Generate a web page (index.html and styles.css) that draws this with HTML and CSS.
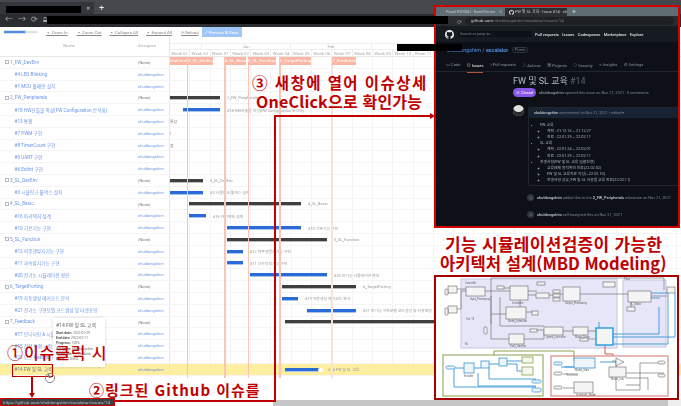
FILE: index.html
```html
<!DOCTYPE html>
<html lang="ko">
<head>
<meta charset="utf-8">
<title>GanttViewer</title>
<link rel="stylesheet" href="styles.css">
</head>
<body>
<div class="page">
  <div class="chrome-tabs"><div class="tab"><b class="black tabname"></b><span class="close">✕</span></div><span class="plus">+</span></div>
  <div class="chrome-addr"><span>←</span><span>→</span><span>⟳</span><span>🔒︎</span></div>
  <div class="toolbar">
    <div class="slider"><i></i></div>
    <a class="zi">▪ Zoom In</a><a class="zo">▪ Zoom Out</a><a class="ca">▪ Collapse All</a><a class="ea">▪ Expand All</a><a class="rl">⟳ Reload</a>
    <button class="save">✓ Preview &amp; Save</button>
  </div>
  <div class="gantt">
    <div class="head">
      <div class="col-name">Name</div>
      <div class="col-who">Assignee</div>
      <div class="col-time">
        <div class="months"><span class="m0"></span><span class="m1">Jan</span><span class="m2">Feb</span></div>
        <div class="weeks"><span>Week 51</span><span>Week 52</span><span>Week 01</span><span>Week 02</span><span>Week 03</span><span>Week 04</span><span>Week 05</span><span>Week 06</span><span>Week 07</span><span>Week 08</span><span>Week 09</span><span>Week 10</span><span>Week 11</span></div>
      </div>
    </div>
    <div class="rows">
      <div class="row"><div class="name grp"><u></u>1_FW_DevEnv</div><div class="who none">(None)</div><div class="track"></div></div>
      <div class="row"><div class="name">#4 LED Blinking</div><div class="who">chuldongshim</div><div class="track"></div></div>
      <div class="row"><div class="name">#1 MCU 툴체인 설치</div><div class="who">chuldongshim</div><div class="track"></div></div>
      <div class="row"><div class="name grp"><u></u>2_FW_Peripherals</div><div class="who none">(None)</div><div class="track"><i class="bar k" style="margin-left:0;width:50px"></i><span class="lbl">2_FW_Peripherals</span></div></div>
      <div class="row"><div class="name">#18 HW산출물 작성(FW Configuration 분석화)</div><div class="who">chuldongshim</div><div class="track"><i class="bar b" style="margin-left:13px;width:37px"></i><span class="lbl">#18 HW산출물 작성(FW Configuration 분석화)</span></div></div>
      <div class="row"><div class="name">#13 통합</div><div class="who">chuldongshim</div><div class="track"><span class="lbl flush">통합</span></div></div>
      <div class="row"><div class="name">#7 PWM 구현</div><div class="who">chuldongshim</div><div class="track"><span class="lbl flush">|</span></div></div>
      <div class="row"><div class="name">#8 TimerCount 구현</div><div class="who">chuldongshim</div><div class="track"><span class="lbl flush">점</span></div></div>
      <div class="row"><div class="name">#9 UART 구현</div><div class="who">chuldongshim</div><div class="track"></div></div>
      <div class="row"><div class="name">#6 ExtInt 구현</div><div class="who">chuldongshim</div><div class="track"></div></div>
      <div class="row"><div class="name grp"><u></u>3_SL_DevEnv</div><div class="who none">(None)</div><div class="track"><i class="bar k" style="margin-left:0;width:33px"></i><span class="lbl">3_SL_DevEnv</span></div></div>
      <div class="row"><div class="name">#3 시뮬링크 툴박스 설치</div><div class="who">chuldongshim</div><div class="track"><i class="bar b" style="margin-left:0;width:33px"></i><span class="lbl">#3 시뮬링크 툴박스 설치</span></div></div>
      <div class="row"><div class="name grp"><u></u>4_SL_Basic</div><div class="who none">(None)</div><div class="track"><i class="bar k" style="margin-left:19px;width:112px"></i><span class="lbl">4_SL_Basic</span></div></div>
      <div class="row"><div class="name">#16 아키텍처 설계</div><div class="who">chuldongshim</div><div class="track"><i class="bar b" style="margin-left:19px;width:17px"></i><span class="lbl">#16 아키텍처 설계</span></div></div>
      <div class="row"><div class="name">#10 기본기능 구현</div><div class="who">chuldongshim</div><div class="track"><i class="bar b" style="margin-left:57px;width:74px"></i><span class="lbl">#10 기본기능 구현</span></div></div>
      <div class="row"><div class="name grp"><u></u>5_SL_Function</div><div class="who none">(None)</div><div class="track"><i class="bar k" style="margin-left:57px;width:100px"></i><span class="lbl">5_SL_Function</span></div></div>
      <div class="row"><div class="name">#12 역주행방지기능 구현</div><div class="who">chuldongshim</div><div class="track"><i class="bar b" style="margin-left:57px;width:16px"></i><span class="lbl">#12 역주행방지기능 구현</span></div></div>
      <div class="row"><div class="name">#11 과속방지기능 구현</div><div class="who">chuldongshim</div><div class="track"><i class="bar b" style="margin-left:57px;width:16px"></i><span class="lbl">#11 과속방지기능 구현</span></div></div>
      <div class="row"><div class="name">#20 전기능 시뮬레이션 확인</div><div class="who">chuldongshim</div><div class="track"><i class="bar b" style="margin-left:80px;width:77px"></i><span class="lbl">#20 전기능 시뮬레이션 확인</span></div></div>
      <div class="row"><div class="name grp"><u></u>6_TargetPorting</div><div class="who none">(None)</div><div class="track"><i class="bar k" style="margin-left:112px;width:74px"></i><span class="lbl">6_TargetPorting</span></div></div>
      <div class="row"><div class="name">#19 자동생성 메커코드 분석</div><div class="who">chuldongshim</div><div class="track"><i class="bar b" style="margin-left:112px;width:16px"></i><span class="lbl">#19 자동생성 메커코드 분석</span></div></div>
      <div class="row"><div class="name">#21 전기능 구현모델 코드생성 및 타겟포팅</div><div class="who">chuldongshim</div><div class="track"><i class="bar b" style="margin-left:137px;width:49px"></i><span class="lbl">#21 전기능 구현모델 코드생성 및 타겟포팅</span></div></div>
      <div class="row"><div class="name grp"><u></u>7_Feedback</div><div class="who none">(None)</div><div class="track"><i class="bar k" style="margin-left:115px;width:149px"></i></div></div>
      <div class="row"><div class="name">#17 모니터링 &amp; 시뮬레이션</div><div class="who">chuldongshim</div><div class="track"></div></div>
      <div class="row"><div class="name">#15 전체 통합 시험</div><div class="who">chuldongshim</div><div class="track"></div></div>
      <div class="row"><div class="name">#22 모스 Readme 작성</div><div class="who">chuldongshim</div><div class="track"></div></div>
      <div class="row hot"><div class="name dark">#14 FW 및 SL 교육</div><div class="who">chuldongshim</div><div class="track"><i class="bar b" style="margin-left:115px;width:36px"></i><b class="blob"></b><span class="lbl">#14 FW 및 SL 교육</span></div></div>
    </div>
    <div class="overlay">
      <i class="vline" style="left:17px"></i><i class="vline" style="left:54px;width:2px"></i><i class="vline" style="left:78px"></i><i class="vline" style="left:109px;width:2px"></i><i class="vline pale" style="left:161px;width:2px"></i>
      <span class="ms" style="left:0;width:17px">eripherals</span><span class="ms" style="left:18px;width:25px">3_SL_DevEnv</span><span class="ms" style="left:55px;width:21px">4_SL_Basic</span><span class="ms" style="left:78px;width:28px">5_SL_Function</span><span class="ms" style="left:110px;width:31px">6_TargetPorting</span><span class="ms" style="left:162px;width:24px">7_Feedback</span>
    </div>
    <div class="tooltip">
      <h4>#14 FW 및 SL 교육</h4>
      <p><b>Start date:</b> 2022-01-29</p><p><b>End date:</b> 2022-02-11</p><p><b>Progress:</b> 100%</p><p><b>Assignee:</b> chuldongshim</p><p><b>Milestone:</b> 7_Feedback</p><p><b>State:</b> CLOSED</p>
    </div>
  </div>
  <div class="statusbar">https://github.com/chuldongshim/escalator/issues/14</div>
  <div class="hscroll"></div>

  <b class="black redact-a"></b>
  <b class="black redact-b"></b>

  <section class="inset">
    <div class="in-tabs">
      <div class="in-tab">Panel ROSRAI - GanttViewer<span>✕</span></div>
      <div class="in-tab on"><svg viewBox="0 0 16 16"><use href="#gh"/></svg>FW 및 SL 교육 · Issue #14 · chu<span>✕</span></div>
      <em>+</em>
    </div>
    <div class="in-addr"><span>⟳</span><span class="url"><b>github.com</b>/chuldongshim/escalator/issues/14</span></div>
    <div class="gh-top">
      <svg class="gh-logo" viewBox="0 0 16 16"><path id="gh" fill="#f0f0f0" d="M8 0C3.58 0 0 3.58 0 8c0 3.54 2.29 6.53 5.47 7.59.4.07.55-.17.55-.38 0-.19-.01-.82-.01-1.49-2.01.37-2.53-.49-2.69-.94-.09-.23-.48-.94-.82-1.13-.28-.15-.68-.52-.01-.53.63-.01 1.08.58 1.23.82.72 1.21 1.87.87 2.33.66.07-.52.28-.87.51-1.07-1.78-.2-3.64-.89-3.64-3.95 0-.87.31-1.59.82-2.15-.08-.2-.36-1.02.08-2.12 0 0 .67-.21 2.2.82.64-.18 1.32-.27 2-.27.68 0 1.36.09 2 .27 1.53-1.04 2.2-.82 2.2-.82.44 1.1.16 1.92.08 2.12.51.56.82 1.27.82 2.15 0 3.07-1.87 3.75-3.65 3.95.29.25.54.73.54 1.48 0 1.07-.01 1.93-.01 2.2 0 .21.15.46.55.38A8.013 8.013 0 0016 8c0-4.42-3.58-8-8-8z"/></svg>
      <div class="gh-search">Search or jump to...</div>
      <nav class="gh-nav"><a>Pull requests</a><a>Issues</a><a>Codespaces</a><a>Marketplace</a><a>Explore</a></nav>
    </div>
    <div class="gh-repo"><a>chuldongshim</a> / <a><strong>escalator</strong></a><span class="pill">Private</span></div>
    <div class="gh-tabs"><a>&lt;&gt; Code</a><a class="cur">⊙ Issues</a><a>⑂ Pull requests</a><a>▷ Actions</a><a>▦ Projects</a><a>◇ Security</a><a>∿ Insights</a><a>⚙ Settings</a></div>
    <div class="gh-title">FW 및 SL 교육 <span>#14</span></div>
    <div class="gh-meta"><span class="closed">⊘ Closed</span><span><b>chuldongshim</b> opened this issue on Nov 21, 2021 · 0 comments</span></div>
    <div class="gh-thread">
      <div class="avatar"></div>
      <div class="comment">
        <div class="c-head"><b>chuldongshim</b> commented on Nov 21, 2021 • edited ▾</div>
        <ul>
          <li>FW 교육<ul><li>계획 : 21.12.16 ~ 21.12.27</li><li>완료 : 22.01.29 ~ 22.02.11</li></ul></li>
          <li>SL 교육<ul><li>계획 : 22.01.24 ~ 22.02.01</li><li>완료 : 22.01.29 ~ 22.02.11</li></ul></li>
          <li>진행사항(FW 및 SL 교육 일괄진행)<ul><li>교육예제 동작확인 완료(22.02.02)</li><li>FW 및 SL 교육자료 작성(~22.02.10)</li><li>진행사항 공유, FW 및 SL 사용법 교육 완료(22.02.11)</li></ul></li>
        </ul>
      </div>
    </div>
    <div class="gh-event first"><i>◷</i><span><b>chuldongshim</b> added this to the <b>2_FW_Peripherals</b> milestone on Nov 21, 2021</span></div>
    <div class="gh-event"><i>♙</i><span><b>chuldongshim</b> self-assigned this on Nov 21, 2021</span></div>
  </section>

  <section class="model">
    <svg class="model-svg" viewBox="434 275 245 125" xmlns="http://www.w3.org/2000/svg">
      <rect x="461" y="279" width="156" height="69" class="area"/>
      <rect x="623" y="280" width="43" height="67" class="area"/>
      <path class="grey" d="M491 324V278H664V290M457 289H466M485 291H510M497 288H510M528 291H537M528 295H553M560 294H563M580 294H628M457 309H461V291H466M491 314H506M526 312H532M491 296V339H509M524 339H544V331M563 331H573M537 330H544M588 331H596M520 300V307M500 297V326H544M588 339H596M651 296H667M631 302V307"/>
      <path class="blue" d="M613 334H659V307 M613 344H668V293H651 M613 337H675V293 M651 298H660 M599 328V322"/>
      <path class="pinkw" d="M605 345V354H613V356"/>
      <path class="olive" d="M494 355V351H574V361"/>
      <path class="blue" d="M455 368H464M474 368H481M489 364H499M507 361H522M507 364H517V371H522M478 373V386H536M489 367V379H536M454 369V387H536"/>
      <path class="blue" d="M564 367H578M622 362H620M600 362H619M578 367M561 367H578"/>
      <path class="grey" d="M578 375H567V373M563 374H578M563 388H577V390M612 361H616V390H640V363H664M610 377H613M626 373H664M626 378H648V390M626 385H640"/>
      <rect x="443" y="355" width="100" height="41" class="grn"/>
      <rect x="551" y="356" width="117" height="40" class="rdb"/>
      <g class="blk">
        <rect x="466" y="287" width="19" height="9"/><rect x="510" y="286" width="18" height="14"/><rect x="506" y="307" width="20" height="12"/><rect x="563" y="287" width="17" height="14"/><rect x="553" y="290" width="7" height="3"/><rect x="553" y="294" width="7" height="3"/><rect x="553" y="298" width="7" height="3"/>
        <rect x="497" y="286" width="7" height="3"/><rect x="537" y="282" width="8" height="3"/><rect x="536" y="293" width="13" height="5"/><rect x="532" y="311" width="6" height="4"/><rect x="544" y="327" width="19" height="8"/><rect x="573" y="327" width="15" height="8"/><rect x="530" y="329" width="7" height="3"/><rect x="509" y="334" width="15" height="10"/><rect x="580" y="338" width="8" height="3"/><rect x="603" y="282" width="12" height="5"/>
        <rect x="628" y="291" width="23" height="11"/><rect x="627" y="307" width="8" height="4"/><rect x="667" y="287" width="8" height="6"/><rect x="448" y="286" width="9" height="7"/><rect x="448" y="306" width="9" height="7"/><rect x="445" y="289" width="3" height="6" rx="1"/><rect x="445" y="308" width="3" height="7" rx="1"/><rect x="484" y="327" width="3" height="7" rx="1"/>
        <rect x="609" y="367" width="17" height="10"/><rect x="574" y="382" width="19" height="11"/>
      </g>
      <g class="blb">
        <rect x="596" y="328" width="17" height="17" class="sel"/>
        <rect x="464" y="363" width="10" height="10"/><rect x="481" y="361" width="8" height="7"/><rect x="499" y="358" width="8" height="8"/><rect x="522" y="357" width="11" height="6" class="grnb"/><rect x="522" y="367" width="11" height="8" class="grnb"/><rect x="446" y="366" width="9" height="3" rx="1.5"/><rect x="532" y="380" width="9" height="3" rx="1.5"/><rect x="532" y="388" width="9" height="4" rx="1.5"/><rect x="554" y="362" width="8" height="3" rx="1.5"/><rect x="574" y="358" width="21" height="10"/>
      </g>
      <g class="blk"><rect x="554" y="372" width="8" height="3" rx="1.5"/><rect x="554" y="386" width="8" height="3" rx="1.5"/><rect x="658" y="361" width="7" height="3" rx="1.5"/><rect x="658" y="374" width="7" height="3" rx="1.5"/><path d="M616 358l8 4-8 4z"/></g>
      <g class="mini">
        <text x="470" y="300">Input_Processing</text><text x="512" y="304">Scheduler</text><text x="508" y="322">Mode_Scheduler</text><text x="565" y="304">Output_Processing</text><text x="546" y="338">Speed_Controller</text><text x="575" y="338">Motor_Driver</text><text x="510" y="347">Fault_Handler</text><text x="630" y="305">SC_Motor</text><text x="466" y="320">Cnt: 10</text><text x="465" y="345">Rx</text><text x="464" y="377">Encoder</text><text x="575" y="371">Model_Main</text><text x="576" y="396">Scheduler_Model</text><text x="611" y="380">Model_Sub</text><text x="465" y="284">Controller</text><text x="624" y="279.5">Plant</text>
      </g>
    </svg>
  </section>
  <div class="corner"></div>

  <div class="ann-box title-box"></div>
  <div class="ann-box status-box"></div>
  <div class="ann-path path-v"></div>
  <div class="ann-path path-h"></div>
  <div class="ann-path path-top"></div>
  <div class="ann-arrow right"></div>
  <div class="ann-path path-down"></div>
  <div class="ann-arrow down"></div>
  <svg class="cursor" viewBox="0 0 12 12"><circle cx="6" cy="6" r="4.6"/><path d="M4 2l3 3.5h-2z"/></svg>

  <div class="note n3">③ 새창에 열어 이슈상세</div>
  <div class="note n3b">OneClick으로 확인가능</div>
  <div class="note n1">①이슈클릭 시</div>
  <div class="note n2">②링크된 Github 이슈를</div>
  <div class="note h1">기능 시뮬레이션검증이 가능한</div>
  <div class="note h2">아키텍처 설계(MBD Modeling)</div>
</div>
</body>
</html>
```
FILE: styles.css
```css
* { box-sizing: border-box; }
html, body { margin: 0; padding: 0; }
body { background: #fff; font-family: Roboto, "Noto Sans CJK KR", sans-serif; overflow: hidden; }
.page { position: relative; width: 681px; height: 406px; overflow: hidden; background: #fff; }
.black { position: absolute; background: #000; display: block; z-index: 6; }
.tabname { left: 6px; top: 4px; width: 75px; height: 7px; }

.chrome-tabs { height: 14px; background: #44484c; display: flex; align-items: flex-end; }
.tab { position: relative; width: 94px; height: 12px; background: #33363a; color: #ddd; font-size: 5px; display: flex; justify-content: flex-end; align-items: center; padding-right: 4px; }
.plus { color: #eee; font-size: 9px; line-height: 12px; margin-left: 5px; }
.chrome-addr { height: 13px; background: #2b2c2f; color: #aaa; font-size: 8px; line-height: 12px; display: flex; gap: 5px; padding-left: 5px; filter: blur(.3px); }

.toolbar { height: 10px; display: flex; align-items: center; padding-left: 4px; font-size: 4.4px; color: #8a8a8a; filter: blur(.4px); }
.toolbar a { text-decoration: underline; white-space: nowrap; }
.slider { width: 33px; height: 2px; background: #ddd; position: relative; }
.slider i { display: block; width: 21px; height: 2px; background: #4a8fe8; box-shadow: 1px 0 0 1px #ddd; }
.zi { margin-left: 9px; }
.zo { margin-left: 9px; }
.ca { margin-left: 8px; }
.ea { margin-left: 8px; }
.rl { margin-left: 9px; }
.save { margin-left: 3px; width: 40px; height: 10px; background: #a0c6f8; color: #fff; border: 0; padding: 0; font: inherit; }

.gantt { position: relative; filter: blur(.5px); }
.head { display: flex; height: 20px; border-bottom: 1px solid #e8e8e8; color: #aaa; font-size: 4.4px; }
.col-name { width: 138px; text-align: center; line-height: 17px; }
.col-who { width: 32px; line-height: 17px; border-right: 1px solid #e5e5e5; }
.col-time { flex: 1; display: flex; flex-direction: column; }
.months { height: 7px; margin-top: 6px; display: flex; border-top: 1px solid #eee; text-align: center; border-bottom: 1px solid #eee; line-height: 5px; }
.m0 { width: 32px; border-right: 1px solid #eee; }
.m1 { width: 89px; border-right: 1px solid #eee; }
.m2 { width: 81px; border-right: 1px solid #eee; }
.weeks { flex: 1; display: flex; line-height: 7px; text-align: center; }
.weeks span { flex: 0 0 20.3px; border-right: 1px solid #eee; white-space: nowrap; overflow: hidden; }

.rows { display: flex; flex-direction: column; }
.row { height: 11.8px; display: flex; align-items: center; border-bottom: 1px solid #f5f5f5; font-size: 4.6px; }
.row.hot { background: #fdeea0; }
.name { width: 138px; padding-left: 14.5px; color: #6e96e4; white-space: nowrap; font-size: 4.7px; }
.name.dark { color: #777; }
.name.grp { padding-left: 5px; display: flex; align-items: center; gap: 1px; color: #6e96e4; }
.name u { width: 4px; height: 4px; border: 1px solid #bbb; display: block; }
.who { width: 32px; color: #6e96e4; font-size: 4.1px; white-space: nowrap; border-right: 1px solid #e5e5e5; height: 100%; line-height: 11px; }
.who.none { color: #777; }
.track { flex: 1; height: 100%; display: flex; align-items: center; background: repeating-linear-gradient(90deg, transparent 0 19.3px, #f4f4f4 19.3px 20.3px); }
.hot .track { background: none; }
.bar { display: block; height: 3px; flex: none; }
.bar.k { background: #3f3f3f; box-shadow: 0 1px 0 #bbb; }
.bar.b { background: #2a6bd8; box-shadow: 0 1px 0 #a9c5ee; }
.lbl { margin-left: 7px; color: #999; font-size: 3.9px; white-space: nowrap; }
.lbl.flush { margin-left: 0; color: #777; }
.blob { display: block; flex: none; width: 5px; height: 4px; margin: 2px 0 0 -3px; border-radius: 2px; background: #fff; }
.blob + .lbl { margin-left: 5px; }

.overlay { position: absolute; left: 170px; top: 20px; width: 264px; height: 321px; pointer-events: none; }
.vline { position: absolute; top: 0; bottom: 0; width: 1px; background: #fbc4b4; }
.vline.pale { background: #fde0d8; }
.ms { position: absolute; top: 0; height: 8px; background: #fcb6a4; color: #fff; font-size: 4.4px; line-height: 8px; text-align: center; white-space: nowrap; overflow: hidden; }

.tooltip { position: absolute; left: 53px; top: 281px; width: 52px; height: 49px; background: #fff; box-shadow: 0 0 3px rgba(0,0,0,.18); padding: 3px 3px; font-size: 3.4px; color: #777; z-index: 2; }
.tooltip h4 { margin: 0 0 3px; font-size: 5px; font-weight: 400; color: #666; white-space: nowrap; }
.tooltip p { margin: 0 0 1.2px; white-space: nowrap; }
.tooltip b { color: #555; }

.statusbar { position: absolute; left: 1px; top: 399px; width: 113px; height: 7px; background: #3c4043; color: #bbb; font-size: 4.4px; line-height: 7px; padding-left: 2px; white-space: nowrap; z-index: 5; filter: blur(.3px); }
.hscroll { position: absolute; left: 273px; right: 0; top: 400px; height: 6px; background: #c6c6c6; }
.corner { position: absolute; left: 668px; right: 0; top: 400px; height: 6px; background: #eee; z-index: 3; }

.redact-a { left: 47px; top: 16px; width: 401px; height: 8px; }
.redact-b { left: 397px; top: 44px; width: 65px; height: 7px; }

.inset { position: absolute; left: 434px; top: 5px; width: 246px; height: 223px; border: 2px solid #d40000; background: #0d1117; color: #7d8590; overflow: hidden; font-size: 4.2px; z-index: 3; display: flex; flex-direction: column; }
.inset > * { filter: blur(.35px); }
.in-tabs { height: 9px; background: #606e73; display: flex; align-items: flex-end; padding-left: 6px; color: #c4c9cb; flex: none; }
.in-tab { width: 62px; height: 8px; line-height: 8px; padding-left: 4px; display: flex; justify-content: space-between; white-space: nowrap; overflow: hidden; padding-right: 2px; font-size: 4px; }
.in-tab.on { background: #2c2d30; width: 62px; margin-left: 1px; gap: 1px; justify-content: flex-start; }
.in-tab svg { width: 5px; height: 5px; margin-top: 1.5px; flex: none; }
.in-tab span { margin-left: auto; }
.in-tabs em { color: #ddd; font-style: normal; font-size: 7px; line-height: 8px; margin-left: 5px; }
.in-addr { height: 10px; background: #2a2b2e; display: flex; align-items: center; padding-left: 21px; gap: 3px; flex: none; color: #999; font-size: 6px; }
.url { background: #1f2023; height: 8px; line-height: 8px; flex: 1; margin-right: 4px; padding-left: 6px; font-size: 4.4px; color: #777; border-radius: 4px; }
.url b { color: #ccc; font-weight: 400; }
.gh-top { height: 16px; background: #161b22; display: flex; align-items: center; padding-left: 9px; flex: none; color: #ddd; font-size: 4.1px; }
.gh-logo { width: 9px; height: 9px; flex: none; }
.gh-search { width: 73px; height: 6px; line-height: 6px; margin-left: 5px; background: #0d1117; color: #7d8590; padding-left: 1px; font-size: 3.8px; }
.gh-nav { display: flex; gap: 3.4px; margin-left: 3px; font-weight: 500; white-space: nowrap; }
.gh-repo { flex: none; height: 14px; padding: 2px 0 0 11px; line-height: 12px; font-size: 5.4px; color: #7d8590; }
.gh-repo a { color: #4f8fe0; }
.gh-repo strong { font-weight: 700; }
.pill { font-size: 3.4px; border: 1px solid #30363d; border-radius: 4px; padding: 0 1.5px; margin-left: 4px; vertical-align: 1px; }
.gh-tabs { flex: none; height: 16px; border-bottom: 1px solid #21262d; display: flex; align-items: center; padding: 2px 0 0 10px; gap: 6.4px; white-space: nowrap; color: #8d949c; font-size: 4px; }
.gh-tabs .cur { color: #ccc; font-weight: 500; border-bottom: 1px solid #b4543e; height: 15px; line-height: 15px; margin-bottom: -1px; }
.gh-title { flex: none; height: 15px; margin-left: 77px; padding-top: 3px; color: #b4bcc4; font-size: 9px; line-height: 12px; white-space: nowrap; }
.gh-title span { color: #5a626c; }
.gh-meta { flex: none; height: 13px; margin-left: 77px; display: flex; align-items: flex-start; padding-top: 1px; gap: 3px; white-space: nowrap; font-size: 3.9px; }
.gh-meta span:last-child { line-height: 9px; }
.closed { background: #8957e5; color: #eee; width: 23px; height: 9px; line-height: 9px; border-radius: 5px; text-align: center; font-weight: 500; }
.gh-thread { flex: none; margin: 7px 0 0 77px; position: relative; }
.avatar { position: absolute; left: 0; top: -2px; width: 11px; height: 11px; border-radius: 50%; background: #e0e0e0; box-shadow: inset 0 -4px 0 #2a2a2a; }
.comment { margin-left: 15px; width: 155px; height: 79px; border: 1px solid #21262d; border-right: 0; border-radius: 2px; color: #aeb6be; font-size: 3.8px; overflow: hidden; }
.c-head { height: 10px; line-height: 9px; background: #152333; padding-left: 5px; color: #7d8590; white-space: nowrap; }
.c-head b { color: #aeb6be; }
.comment ul { margin: 0; padding: 0 0 0 11px; list-style: disc; line-height: 6.2px; }
.comment > ul { padding-top: 3.5px; }
.comment ul ul { padding-left: 7px; list-style: circle; }
.gh-event { flex: none; display: flex; align-items: center; height: 17px; margin-left: 91px; gap: 3px; white-space: nowrap; font-size: 3.9px; }
.gh-event.first { margin-top: 3px; }
.gh-event i { width: 7px; height: 7px; border-radius: 50%; background: #30363d; font-style: normal; text-align: center; line-height: 7px; font-size: 4px; flex: none; }
.gh-event b { color: #aeb6be; }

.model { position: absolute; left: 434px; top: 275px; width: 245px; height: 125px; background: #fff; border: 2px solid #a40000; z-index: 3; overflow: hidden; }
.model-svg { position: absolute; left: -2px; top: -2px; width: 245px; height: 125px; filter: blur(.2px); }
.area { fill: #e6e6f8; stroke: #c4c4de; stroke-width: 1; }
.grey { fill: none; stroke: #777; stroke-width: .7; }
.blue { fill: none; stroke: #4a9ed8; stroke-width: 1; }
.pinkw { fill: none; stroke: #c8605a; stroke-width: 1; }
.olive { fill: none; stroke: #8aa04e; stroke-width: 1; }
.grn { fill: #fff; fill-opacity: 0; stroke: #9aae6c; stroke-width: 1.2; }
.rdb { fill: #fff; fill-opacity: 0; stroke: #d98a86; stroke-width: 1.2; }
.blk rect, .blk path { fill: #f4f4f4; stroke: #666; stroke-width: .6; }
.blb rect { fill: #eef6fc; stroke: #3c97d3; stroke-width: .8; }
.blb .sel { stroke: #2ea0dc; stroke-width: 1.5; fill: #f4f4f4; }
.blb .grnb { stroke: #8aa04e; fill: #f6f8ee; }
.mini text { font-size: 2.6px; fill: #666; font-family: Roboto, sans-serif; }

.ann-box { position: absolute; border: 1px solid #c00000; z-index: 5; }
.title-box { left: 12px; top: 364px; width: 41px; height: 13px; }
.status-box { left: 0; top: 398px; width: 115px; height: 8px; z-index: 6; }
.ann-path { position: absolute; background: #c00000; z-index: 5; }
.path-v { left: 274px; top: 115px; width: 2px; height: 287px; }
.path-h { left: 114px; top: 400px; width: 162px; height: 2px; }
.path-top { left: 274px; top: 115px; width: 156px; height: 2px; }
.ann-arrow { position: absolute; width: 0; height: 0; z-index: 5; }
.ann-arrow.right { left: 430px; top: 113px; border-left: 5px solid #c00000; border-top: 3px solid transparent; border-bottom: 3px solid transparent; }
.path-down { left: 31px; top: 377px; width: 2px; height: 16px; }
.ann-arrow.down { left: 29px; top: 393px; border-top: 5px solid #c00000; border-left: 3px solid transparent; border-right: 3px solid transparent; }
.cursor { position: absolute; left: 44px; top: 372px; width: 12px; height: 12px; z-index: 5; fill: none; stroke: #888; stroke-width: 1; }

.note { position: absolute; color: #c00000; font-family: "Noto Sans CJK KR", sans-serif; font-weight: 700; white-space: nowrap; z-index: 5; line-height: 1; }
.n3 { left: 252px; top: 75px; font-size: 15.5px; letter-spacing: 1.45px; }
.n3b { left: 256px; top: 93px; font-size: 16px; letter-spacing: .2px; }
.n1 { left: 7px; top: 344px; font-size: 16px; font-weight: 500; letter-spacing: .9px; }
.n2 { left: 89px; top: 382px; font-size: 15px; letter-spacing: 1px; }
.h1 { left: 445px; top: 235px; font-size: 17px; letter-spacing: .3px; }
.h2 { left: 440px; top: 255px; font-size: 16.6px; letter-spacing: 0; }
```
